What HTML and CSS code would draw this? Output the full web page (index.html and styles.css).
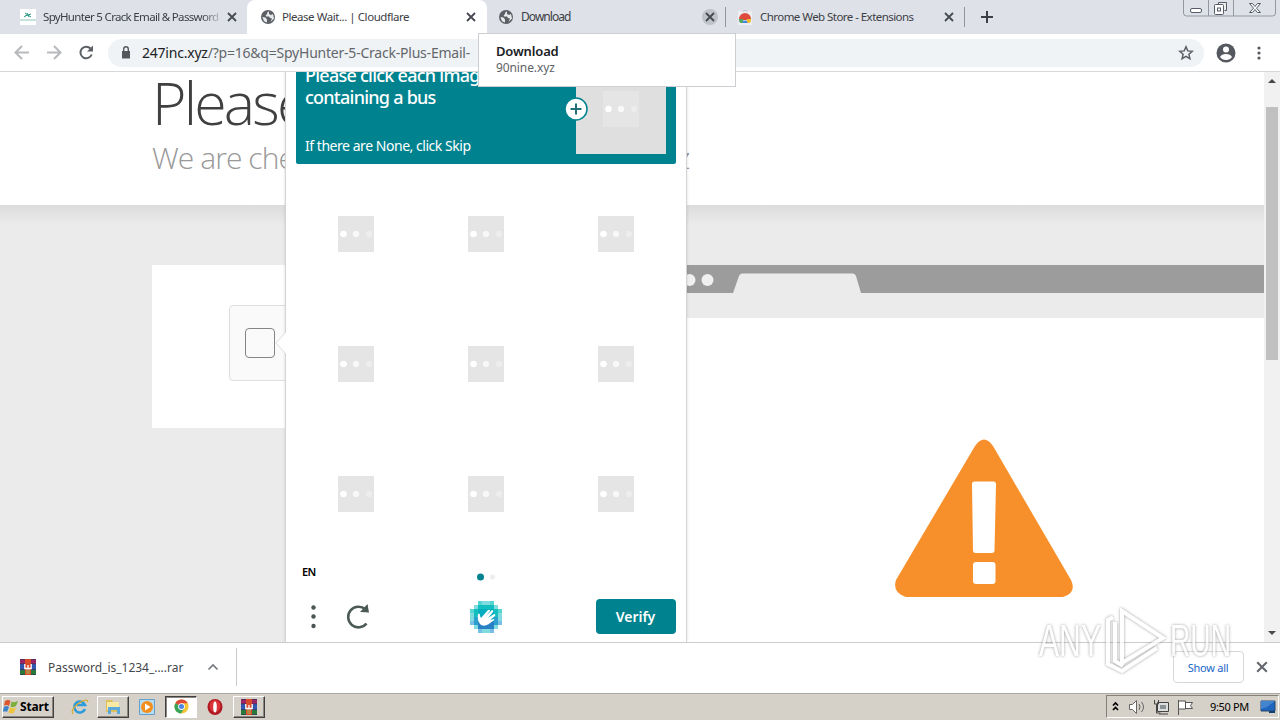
FILE: index.html
```
<!DOCTYPE html>
<html lang="en">
<head>
<meta charset="utf-8">
<title>Please Wait... | Cloudflare</title>
<link rel="stylesheet" href="styles.css">
</head>
<body>
<svg class="defs" width="0" height="0">
  <symbol id="x" viewBox="0 0 10 10"><path d="M1 1l8 8M9 1l-8 8" fill="none" stroke="currentColor" stroke-width="1.800"/></symbol>
  <symbol id="globe" viewBox="0 0 14 14"><circle cx="7" cy="7" r="7" fill="#5c6065"/><path d="M8 1.2L6 2.8 6.2 4 4.8 5l.2 1.5h3l1 1.6 2 .3L9.5 12 13 8.5 12 4l-2 1-2-1zM1.4 7l3 .6L6 9.5v3.1L3 11.3z" fill="#e7e9ec"/></symbol>
  <symbol id="rar" viewBox="0 0 18 16"><path fill="#9d2465" d="M1 0h16v5H1z"/><path fill="#3356b0" d="M1 5h16v6H1z"/><path fill="#287a39" d="M1 11h16v5H1z"/><path d="M1 4.800h16M1 10.600h16M1 .5h16M1 15.5h16" stroke="#343353" stroke-width=".7"/><path fill="#d84a28" d="M6 0h6v16H6z"/><path fill="#b98347" d="M7 10h4v5H7z"/><path d="M5.800 5v4.500h6.400V5M9 6v3" fill="none" stroke="#fff" stroke-width="1.300"/></symbol>
  <symbol id="chrome" viewBox="0 0 16 16"><circle cx="8" cy="8" r="7.5" fill="#f4c534"/><path d="M8 8L1.4 4.4A7.5 7.5 0 0 1 14.7 4.5H8z" fill="#df4939"/><path d="M8 8L1.4 4.4A7.5 7.5 0 0 0 7.5 15.5L11 9.5z" fill="#3ba45b"/><circle cx="8" cy="8" r="3.6" fill="#fff"/><circle cx="8" cy="8" r="2.7" fill="#4c87e5"/></symbol>
</svg>
<div class="desktop">
  <header class="tabs">
    <div class="tab"><svg class="fav" viewBox="0 0 16 16"><path fill="#fff" d="M0 0h16v16H0z"/><path d="M5 4l6 4M5 7l6-2M7 4l2 4M4 8l3-2" stroke="#299b86"/><path d="M0 11h16" stroke="#8fc4bc"/></svg><span class="title t1">SpyHunter 5 Crack Email &amp; Password</span><span class="close"><svg><use href="#x"/></svg></span></div>
    <div class="tab active"><svg class="fav globe"><use href="#globe"/></svg><span class="title t2">Please Wait... | Cloudflare</span><span class="close"><svg><use href="#x"/></svg></span></div>
    <div class="tab"><svg class="fav globe"><use href="#globe"/></svg><span class="title t3">Download</span><span class="close round"><svg><use href="#x"/></svg></span></div>
    <div class="tab store"><svg class="fav" viewBox="0 0 16 16"><path fill="#eceef1" d="M1 2h14v14H1z"/><path d="M6 3c0-2 4-2 4 0" fill="none" stroke="#b9bdc2"/><path fill="#df4a3d" d="M2 10a6 6 0 0 1 12 0l-3 1H5z"/><path fill="#50a761" d="M2 10c-.3 1.500.3 3 1.500 4H7l-1-4z"/><path fill="#f0bd31" d="M14 10c.3 1.500-.3 3-1.500 4H9l1-4z"/><path fill="#4386dd" d="M5.500 14a2.500 2.500 0 0 1 5 0z"/></svg><span class="title t4">Chrome Web Store - Extensions</span><span class="close"><svg><use href="#x"/></svg></span></div>
    <svg class="plus" viewBox="0 0 12 12"><path d="M6 0v12M0 6h12" stroke="#3c4045" stroke-width="2"/></svg>
    <svg class="winctl" viewBox="0 0 94 18" fill="none" stroke="#9297a2"><path d="M.5 0v13q0 3 3 3h86q3 0 3-3V0M25.500 0v16M50.500 0v16" /><g stroke="#555b67"><rect x="7.500" y="8.500" width="11" height="4" rx="1.500" fill="#fff"/><path d="M35.500 4.500v-2h8v8h-2" fill="#eee"/><rect x="31.500" y="4.500" width="9" height="10" rx="1" fill="#fff"/><rect x="34.500" y="8" width="3" height="3"/><path d="M66.500 3.500h3l2.500 3 2.500-3h3l-4 4.700 4 4.300h-3l-2.500-3-2.500 3h-3l4-4.300z" fill="#fff"/></g></svg>
  </header>
  <nav class="toolbar">
    <svg class="nav" viewBox="0 0 108 37" fill="none" stroke-width="2"><path d="M29 18.500H16M22 12l-6.500 6.500L22 25M47 18.500h13M54 12l6.500 6.500L54 25" stroke="#b7b9bc"/><path d="M90.500 14.500a5.800 5.800 0 1 0 1.200 6" stroke="#5c6065"/><path d="M93 11.500v6h-6z" fill="#5c6065"/></svg>
    <div class="omni"><svg class="lock" viewBox="0 0 10 13"><path d="M1 5h8v7.500H1z" fill="#54585d"/><path d="M2.700 5V3a2.300 2.300 0 0 1 4.600 0v2" fill="none" stroke="#54585d" stroke-width="1.400"/></svg><span class="url"><b>247inc.xyz</b>/?p=16&amp;q=SpyHunter-5-Crack-Plus-Email-</span><svg class="star" viewBox="0 0 16 16"><path d="M8 1.800l1.800 4.100 4.500.4-3.400 3 1 4.400L8 11.400l-3.900 2.300 1-4.400-3.400-3 4.500-.4z" fill="none" stroke="#5c6065" stroke-width="1.500"/></svg></div>
    <svg class="user" viewBox="0 0 20 20"><circle cx="10" cy="10" r="9.500" fill="#55595f"/><circle cx="10" cy="6.500" r="3" fill="#fff"/><path d="M4 14q1.500-3 6-3t6 3q-2 3-6 3t-6-3z" fill="#fff"/></svg>
    <svg class="more" viewBox="0 0 4 14" fill="#55595f"><circle cx="2" cy="2" r="1.600"/><circle cx="2" cy="7" r="1.600"/><circle cx="2" cy="12" r="1.600"/></svg>
  </nav>
  <div class="viewport">
    <main class="page">
      <section class="intro"><h1>Please Wait...</h1><h2>We are checking your browser... 247inc.xyz</h2></section>
      <section class="content">
        <div class="card"><div class="check"><div class="box"></div></div></div>
        <div class="shot">
          <div class="shotbar"><svg viewBox="0 0 600 28"><circle cx="25.500" cy="15" r="6" fill="#f0f0f0"/><circle cx="43.500" cy="15" r="6" fill="#f0f0f0"/><path d="M69 28l6-17q1-2.500 3-2.500h111q2 0 3 2.500l5 17z" fill="#ebebeb"/></svg></div>
          <div class="shotnav"></div>
          <div class="shotbody"><svg viewBox="0 0 180 160"><path d="M81 7q9-13 18 0l78 134q6 13-8 17H12q-14-4-10-17z" fill="#f7902b"/><path d="M80.500 42.500h19q2.500 0 2.500 3l-1.500 66q0 2.500-3 2.500h-16q-2.500 0-2.500-3L78 45q0-2.500 2.500-2.500z" fill="#fff"/><rect x="79" y="123" width="22.500" height="22" rx="3" fill="#fff"/></svg></div>
        </div>
      </section>
    </main>
    <div class="scroll"><i class="up"></i><i class="thumb"></i><i class="down"></i></div>
    <div class="captcha">
      <svg class="arrow" viewBox="0 0 11 22"><path d="M11 0L1 11l10 11" fill="#fff" stroke="#ddd"/></svg>
      <div class="clip">
        <div class="prompt">
          <div class="ptext"><p class="ask">Please click each image<br>containing a bus</p><p class="none">If there are None, click Skip</p></div>
          <div class="sample"><svg class="dots" viewBox="0 0 36 36" fill="#fff"><path d="M0 0h36v36H0z" fill="#e5e5e5"/><circle cx="5.500" cy="18" r="3.200"/><circle cx="18" cy="18" r="3.200" opacity=".75"/><circle cx="31" cy="18" r="3" opacity=".3"/></svg></div>
          <svg class="add" viewBox="0 0 24 24"><circle cx="12" cy="12" r="11" fill="#fff" stroke="#00838f" stroke-width="1.500"/><path d="M12 6.500v11M6.500 12h11" stroke="#216f78" stroke-width="2"/></svg>
        </div>
        <div class="grid"><i></i><i></i><i></i><i></i><i></i><i></i><i></i><i></i><i></i></div>
        <div class="pager"><strong>EN</strong><svg viewBox="0 0 20 8"><circle cx="4.500" cy="4" r="3.500" fill="#00838f"/><circle cx="16.500" cy="4" r="2.500" fill="#eee"/></svg></div>
        <div class="actions">
          <svg class="tools" viewBox="0 0 70 28"><g fill="#4c5555"><circle cx="8.500" cy="4.500" r="2.200"/><circle cx="8.500" cy="13.500" r="2.200"/><circle cx="8.500" cy="23" r="2.200"/></g><path d="M61.500 20.500a10.300 10.300 0 1 1-1-14" fill="none" stroke="#4c5a56" stroke-width="2.600"/><path d="M62.500 1l1.500 8.500-9-.5z" fill="#4c5a56"/></svg>
          <svg class="hand" viewBox="0 0 32 32"><path fill="#81dce0" d="M8 0h16v4h4v4h4v16h-4v4h-4v4H8v-4H4v-4H0V8h4V4h4z"/><path fill="#12bfbe" d="M8 4h16v4h4v8H4V8h4z"/><path fill="#2d9fce" d="M4 16h24v8h-4v4H8v-4H4z"/><path fill="#00aec0" d="M8 8h16v12H8z"/><path fill="#2980c5" d="M8 20h16v8H8z"/><path fill="#55d6d2" d="M8 0h4v4H8zM20 0h4v4h-4zM0 8h4v4H0zM28 8h4v4h-4z"/><path fill="#79bfe5" d="M0 20h4v4H0zM28 20h4v4h-4zM8 28h4v4H8zM20 28h4v4h-4z"/><path fill="#fff" d="M10 23q-3-4-2-10c1-1 2-1 2 2l1 2 7-8q2-1 2 1l-4 5 6-6q2 0 1 2l-5 6 6-4q2 0 1 2l-5 4 4-1q1 1-1 2c-4 3-9 7-13 3z"/></svg>
          <button>Verify</button>
        </div>
      </div>
    </div>
  </div>
  <footer class="downloads">
    <svg class="rar"><use href="#rar"/></svg><span class="file">Password_is_1234_....rar</span><svg class="chev" viewBox="0 0 12 8"><path d="M1.500 6.500L6 2l4.500 4.500" fill="none" stroke="#73777c" stroke-width="1.600"/></svg><i class="sep"></i><span class="showall">Show all</span><svg class="xbar"><use href="#x"/></svg>
  </footer>
  <footer class="taskbar">
    <div class="task start"><svg viewBox="0 0 16 16"><path d="M2 2q3-2 5.500 0L6 7Q3.500 5 1 7z" fill="#dd552d"/><path d="M8.500 2.500Q11 4 15 2l-2 5q-3 2-5.500.5z" fill="#7eaf3c"/><path d="M1 8q3-2 5 0l-2 5q-2-1.500-4.500 0z" fill="#3d82c8"/><path d="M7 8.500q3 1.500 6 0l-2 5q-3 2-5.500 0z" fill="#eec340"/></svg><span>Start</span></div>
    <div class="task flat ie"><svg viewBox="0 0 18 18"><path d="M14 12a5.500 5.500 0 1 1 0-4H6" fill="none" stroke="#2d9bdc" stroke-width="2.500" transform="translate(0 -1)"/><path d="M2 16Q-1 12 8 5q8-5 9-1" fill="none" stroke="#d8a929" stroke-width="1.200"/></svg></div>
    <div class="task win"><svg viewBox="0 0 18 18"><path d="M2 2h6l1 2h6v10H2z" fill="#dfbf5a"/><path d="M3 4h12v8H3z" fill="#f9e9a2"/><path d="M4 9h12v7h-3v-4H7v4H4z" fill="#5aa9da"/></svg></div>
    <div class="task flat media"><svg viewBox="0 0 18 18"><path d="M1.500 1.500h15v15h-15z" fill="#b9dced" stroke="#63a0ce"/><circle cx="9" cy="9" r="6" fill="#f28e1d"/><path d="M7 5.500v7l5.500-3.500z" fill="#fff"/></svg></div>
    <div class="task win pressed"><svg class="small"><use href="#chrome"/></svg></div>
    <div class="task flat opera"><svg viewBox="0 0 18 18"><ellipse cx="9" cy="9" rx="7.500" ry="8" fill="#b01822"/><ellipse cx="9" cy="8" rx="5.500" ry="6" fill="#da3436"/><ellipse cx="9" cy="9" rx="1.800" ry="5.500" fill="#fff"/></svg></div>
    <div class="task win"><svg><use href="#rar"/></svg></div>
    <div class="tray"><svg class="icons" viewBox="0 0 86 20" fill="none" stroke="#333"><path d="M4 8.500L6.500 6 9 8.500M4 13l2.500-2.500L9 13" stroke="#000" stroke-width="1.700"/><path d="M20.500 7.500h3l4-4v13l-4-4h-3z" fill="#fff" stroke="#666"/><path d="M30 7q2 3 0 6M32.500 5q4 5 0 10" stroke="#666"/><path d="M48.500 5.500h11v9h-11z" fill="#ddd" stroke="#444"/><path d="M51 8h6v4h-6z" fill="#8b9295" stroke="none"/><path d="M50 17h9M45.500 3v4h4V3M47.500 7v9h4" stroke="#444"/><path d="M69.500 3v15M69.500 4h7v8h-7M76.500 5.500h7l-2 3 2 3h-7" fill="#fff" stroke="#555"/></svg><span>9:50 PM</span><svg class="monitor" viewBox="0 0 16 14"><path d="M1 1h14v10H1z" fill="#1e65bd" stroke="#27466d"/><path d="M1 1h14l-8 6-6 2z" fill="#4384cf"/><path d="M9 11h6v2H9z" fill="#173f70"/></svg></div>
  </footer>
  <div class="tooltip"><strong>Download</strong><span>90nine.xyz</span></div>
  <svg class="watermark" viewBox="0 0 200 66"><g class="letters"><text x="3" y="48" textLength="62" lengthAdjust="spacingAndGlyphs">ANY</text><text x="134" y="48" textLength="61" lengthAdjust="spacingAndGlyphs">RUN</text></g><path class="mark" d="M86 3l41 27-41 25zM86 3v47M77 9l-5 3v44l14 7 35-23M79 14v39l8 5"/></svg>
</div>
</body>
</html>
```
FILE: styles.css
```
* { box-sizing: border-box; }
body { margin: 0; font-family: "Noto Sans", "Open Sans", sans-serif; }
svg { display: block; flex: none; }
.defs { position: absolute; }
.desktop { position: relative; width: 1280px; height: 720px; display: flex; flex-direction: column; overflow: hidden; background: #fff; }
.tabs { height: 34px; flex: none; background: #dee1e8; display: flex; padding-left: 8px; }
.tab { width: 239px; height: 34px; display: flex; align-items: center; padding: 0 7px 0 12px; font-size: 11.5px; color: #3c4045; }
.tab.active { background: #fff; border-radius: 8px 8px 0 0; width: 240px; margin-right: -1px; padding-left: 14px; padding-right: 8px; }
.tab .fav { width: 16px; height: 16px; margin-right: 7px; }
.tab .fav.globe { width: 14px; height: 14px; }
.tab:nth-child(3) { padding-left: 13px; border-right: 1px solid #9196a0; height: 20px; margin-top: 7px; width: 240px; }
.tab:nth-child(3) .fav { margin-right: 8px; }
.tab.store { height: 20px; margin-top: 7px; border-right: 1px solid #9196a0; padding-left: 11px; }
.title { flex: 1; white-space: nowrap; overflow: hidden; line-height: 18px; }
.t1 { letter-spacing: -.68px; -webkit-mask-image: linear-gradient(90deg, #000 88%, transparent 100%); mask-image: linear-gradient(90deg, #000 88%, transparent 100%); }
.t2 { letter-spacing: -.45px; }
.t3 { letter-spacing: -.95px; font-size: 12px; }
.t4 { letter-spacing: -.55px; }
.close { width: 16px; height: 16px; border-radius: 50%; display: grid; place-items: center; color: #454950; }
.close svg { width: 10px; height: 10px; }
.close.round { background: #bfc2c9; }
.plus { width: 12px; height: 12px; margin: 11px 0 0 16px; }
.winctl { width: 94px; height: 18px; margin-left: auto; margin-right: 3px; }
.toolbar { height: 38px; flex: none; background: #fff; border-bottom: 1px solid #d6d8da; display: flex; align-items: center; }
.nav { width: 108px; height: 37px; }
.omni { width: 1096px; height: 28px; border-radius: 14px; background: #f0f3f5; display: flex; align-items: center; padding: 0 10px 0 13px; }
.lock { width: 10px; height: 13px; }
.url { font-size: 14px; color: #63676c; margin: -1px 0 0 11px; flex: 1; letter-spacing: -.22px; white-space: nowrap; }
.url b { font-weight: 400; color: #202124; }
.star { width: 16px; height: 16px; }
.user { width: 20px; height: 20px; margin-left: 12px; }
.more { width: 4px; height: 14px; margin-left: 21px; }
.viewport { height: 570px; flex: none; display: flex; position: relative; }
.page { width: 1264px; height: 570px; overflow: hidden; background: #ebebeb; }
.intro { height: 133px; background: #fff; padding-left: 152px; overflow: hidden; }
h1, h2 { margin: 0; font-weight: 300; white-space: nowrap; font-family: "Open Sans", "Noto Sans", sans-serif; }
h1 { font-size: 59px; line-height: 60px; height: 64px; color: #404040; letter-spacing: -2.8px; }
h2 { font-size: 30px; line-height: 44px; color: #999; letter-spacing: -.93px; }
.content { height: 437px; padding: 60px 0 0 152px; display: flex; background: linear-gradient(#dcdcdc, #e5e5e5 12px, #ebebeb 20px); }
.card { width: 512px; height: 163px; background: #fff; padding: 40px 0 0 77px; }
.check { width: 304px; height: 76px; border: 1px solid #dedede; border-radius: 4px; background: #fafafa; padding: 22px 0 0 15px; }
.box { width: 30px; height: 30px; border: 1px solid #858585; border-radius: 4px; }
.shot { width: 600px; background: #fff; }
.shotbar { height: 28px; background: #9c9c9c; }
.shotbar svg { width: 600px; height: 28px; }
.shotnav { height: 25px; background: #ebebeb; }
.shotbody { padding: 121px 0 0 230px; }
.shotbody svg { width: 180px; height: 160px; }
.scroll { width: 16px; background: #f1f1f1; display: flex; flex-direction: column; align-items: center; }
.up { border: 4px solid transparent; border-top: 0; border-bottom: 4px solid #484848; margin-top: 7px; }
.thumb { width: 12px; height: 253px; background: #c0c0c0; margin-top: 24px; }
.down { border: 4px solid transparent; border-bottom: 0; border-top: 4px solid #484848; margin-top: 271px; }
.captcha { position: absolute; left: 285px; top: 0; width: 402px; height: 570px; background: #fff; border: solid #d4d4d4; border-width: 0 1px; box-shadow: 0 0 3px #0002; clip-path: inset(0 -3px 0 -14px); }
.arrow { position: absolute; left: -11px; top: 260px; width: 11px; height: 22px; }
.clip { height: 570px; padding: 0 10px; overflow: hidden; }
.prompt { height: 92px; background: #00838f; border-radius: 0 0 2px 2px; display: flex; justify-content: space-between; padding: 0 10px 10px 9px; color: #fff; position: relative; }
.ask { margin: -8px 0 0; font-size: 18px; line-height: 22px; font-weight: 500; white-space: nowrap; letter-spacing: -.75px; }
.none { margin: 27px 0 0; font-size: 14px; line-height: 22px; white-space: nowrap; letter-spacing: -.46px; }
.sample { width: 90px; height: 82px; background: #dfdfdf; padding: 19px 0 0 27px; }
.dots { width: 36px; height: 36px; }
.add { position: absolute; left: 268px; top: 25px; width: 24px; height: 24px; }
.grid { display: grid; grid-template-columns: repeat(3, 130px); grid-template-rows: repeat(3, 130px); height: 390px; margin: 5px -5px 0; place-items: center; }
.grid i { width: 36px; height: 36px; background: radial-gradient(circle at 5.5px 18px, #fff 3px, transparent 3.600px), radial-gradient(circle at 18px 18px, #f8f8f8 2.700px, transparent 3.600px), radial-gradient(circle at 31px 18px, #ededed 2.700px, transparent 3.600px), #e5e5e5; }
.pager { height: 40px; padding: 5px 0 0 6px; display: flex; }
.pager strong { font-size: 11px; line-height: 16px; letter-spacing: -.6px; width: 174px; font-weight: 600; }
.pager svg { width: 20px; height: 8px; margin-top: 9px; }
.actions { display: flex; height: 35px; align-items: center; }
.tools { width: 70px; height: 28px; margin-left: 9px; }
.hand { width: 32px; height: 32px; margin-left: 95px; }
button { width: 80px; height: 35px; margin: 0 0 0 auto; border: 0; border-radius: 4px; background: #00838f; color: #fff; font: 600 14px "Noto Sans", sans-serif; padding: 0 1px 0 0; letter-spacing: -.05px; }
.downloads { height: 51px; flex: none; border-top: 1px solid #ccc; background: #fff; display: flex; align-items: center; padding: 0 0 2px 19px; }
.rar { width: 18px; height: 16px; }
.file { font-size: 12px; width: 160px; margin-left: 11px; color: #44474b; white-space: nowrap; letter-spacing: -.02px; }
.chev { width: 12px; height: 8px; margin-left: -1px; }
.sep { width: 1px; height: 38px; background: #ccc; margin-left: 17px; }
.showall { width: 71px; height: 32px; border: 1px solid #d6d8da; border-radius: 4px; color: #1967c8; font-size: 11px; display: grid; place-items: center; margin-left: 936px; padding-right: 1px; letter-spacing: -.25px; }
.xbar { width: 12px; height: 12px; margin-left: 12px; color: #65696f; }
.taskbar { height: 27px; flex: none; display: flex; align-items: center; background: #d5d0c8; border-top: 1px solid #aaa8a3; padding: 0 1px 1px 2px; }
.task { height: 22px; display: grid; place-items: center; border: 1px solid; border-color: #fff #404040 #404040 #fff; box-shadow: inset -1px -1px #8b8780; }
.task svg { width: 18px; height: 18px; }
.task svg.small { width: 15px; height: 15px; }
.start { width: 52px; display: flex; }
.start svg { width: 16px; height: 16px; }
.start span { font-size: 12px; font-weight: 700; letter-spacing: -.15px; margin-left: 1px; }
.flat { border: 0; box-shadow: none; }
.win { width: 32px; }
.pressed { background: #fff; border-color: #404040 #fff #fff #404040; box-shadow: inset 1px 1px #8b8780; }
.ie { width: 43px; padding-left: 8px; }
.media, .opera { width: 36px; }
.tray { height: 23px; width: 173px; margin-left: auto; border: 1px solid; border-color: #858078 #fff #fff #858078; display: flex; align-items: center; padding-left: 2px; }
.icons { width: 86px; height: 20px; }
.tray span { font-size: 11px; width: 40px; margin-left: 15px; white-space: nowrap; letter-spacing: -.33px; }
.monitor { width: 16px; height: 14px; margin-left: 10px; }
.tooltip { position: absolute; left: 478px; top: 33px; width: 258px; height: 54px; background: #fff; border: 1px solid #ccced2; display: flex; flex-direction: column; padding: 9px 17px; }
.tooltip strong { font-size: 13px; font-weight: 600; line-height: 17px; letter-spacing: -.15px; color: #202124; }
.tooltip span { font-size: 12px; line-height: 16px; color: #5f6368; letter-spacing: -.1px; }
.watermark { position: absolute; left: 1036px; top: 608px; width: 200px; height: 66px; filter: drop-shadow(0 0 1.500px #777); opacity: .7; }
.letters { font: 400 45px "Liberation Sans", sans-serif; fill: #fff; }
.mark { fill: none; stroke: #fff; stroke-width: 4; }
```
